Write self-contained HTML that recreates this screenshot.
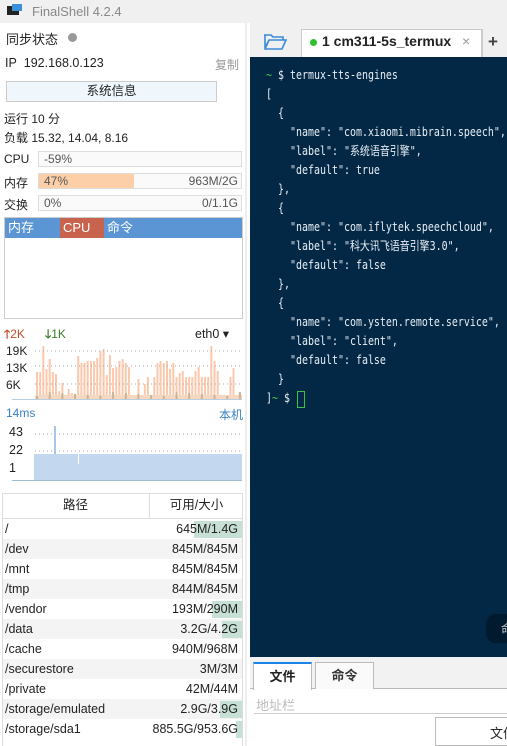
<!DOCTYPE html>
<html><head><meta charset="utf-8"><style>
*{margin:0;padding:0;box-sizing:border-box}
body{width:507px;height:746px;overflow:hidden;background:#fff;font-family:"Liberation Sans","Noto Sans CJK SC",sans-serif;font-size:12px;color:#222;position:relative}
.a{position:absolute}
.term{font-family:"DejaVu Sans Mono","Noto Sans CJK SC",monospace;font-size:12px;color:#e8eef4;white-space:pre;line-height:19px;transform:scaleX(0.83);transform-origin:0 0}
.bar{position:absolute;left:38px;width:204px;height:16px;border:1px solid #ddd;background:#fafafa;font-size:12px;color:#555;line-height:14px}
.rows div{height:20px;line-height:20px;font-size:12.5px;position:relative;padding-left:2px}
.rows div:nth-child(even){background:#f4f4f4}
.rows span{position:absolute;right:4px;top:0}
.rows i{position:absolute;right:0;top:2px;height:17px;background:#c7e0d6}
</style></head><body>
<div class="a" style="left:0;top:0;width:507px;height:23px;background:#f0f0f0"></div>
<svg class="a" style="left:7px;top:4px" width="16" height="14"><rect x="0" y="2" width="12" height="9" fill="#222"/><rect x="5" y="0" width="10" height="7" fill="#3b8fd8"/></svg>
<div class="a" style="left:32px;top:4px;color:#888;font-size:13px">FinalShell 4.2.4</div>
<div class="a" style="left:6px;top:29px;font-size:13px">同步状态</div>
<div class="a" style="left:68px;top:33px;width:9px;height:9px;border-radius:50%;background:#999"></div>
<div class="a" style="left:5px;top:56px;font-size:12.5px">IP&nbsp; 192.168.0.123</div>
<div class="a" style="left:215px;top:56px;color:#999">复制</div>
<div class="a" style="left:6px;top:81px;width:211px;height:21px;border:1px solid #ccc;background:#eff7fd;text-align:center;line-height:19px;font-size:12.5px">系统信息</div>
<div class="a" style="left:4px;top:110px">运行 10 分</div>
<div class="a" style="left:4px;top:129px">负载 15.32, 14.04, 8.16</div>
<div class="a" style="left:4px;top:152px">CPU</div>
<div class="bar" style="top:151px"><span style="margin-left:5px">-59%</span></div>
<div class="a" style="left:4px;top:174px">内存</div>
<div class="bar" style="top:173px"><div style="position:absolute;left:0;top:0;width:95px;height:14px;background:#fccfa8"></div><span style="position:absolute;left:5px">47%</span><span style="position:absolute;right:3px">963M/2G</span></div>
<div class="a" style="left:4px;top:196px">交换</div>
<div class="bar" style="top:195px"><span style="position:absolute;left:5px">0%</span><span style="position:absolute;right:3px">0/1.1G</span></div>
<div class="a" style="left:4px;top:217px;width:239px;height:102px;border:1px solid #ccc"></div>
<div class="a" style="left:5px;top:218px;width:237px;height:20px;background:#5b95d3;color:#fff;font-size:13px;line-height:20px"><span style="padding-left:3px">内存</span><span style="position:absolute;left:55px;width:44px;height:20px;background:#c8644e;padding-left:3px">CPU</span><span style="position:absolute;left:102px">命令</span></div>
<div class="a" style="left:4px;top:325px;color:#c0502a;font-size:12px"><b>🡑</b>2K</div>
<div class="a" style="left:45px;top:325px;color:#3a7a28;font-size:12px"><b>🡓</b>1K</div>
<div class="a" style="left:195px;top:326px;font-size:12.5px">eth0 ▾</div>
<svg class="a" style="left:0;top:340px" width="245" height="142" id="ch"></svg>
<div class="a" style="left:6px;top:343px;font-size:12px;line-height:17px">19K<br>13K<br>6K</div>
<div class="a" style="left:6px;top:406px;color:#3a7fc4;font-size:12px">14ms</div>
<div class="a" style="left:219px;top:406px;color:#3a7fc4;font-size:12px">本机</div>
<div class="a" style="left:9px;top:423px;font-size:12.5px;line-height:18px">43<br>22<br>1</div>
<div class="a" style="left:2px;top:493px;width:241px;height:253px;border:1px solid #ddd;border-bottom:none"></div>
<div class="a" style="left:2px;top:493px;width:241px;height:26px;border-bottom:1px solid #ddd;font-size:12.5px;line-height:25px"><span style="position:absolute;left:0;width:148px;text-align:center;border-right:1px solid #ddd;height:25px">路径</span><span style="position:absolute;left:148px;width:93px;text-align:center">可用/大小</span></div>
<div class="a rows" style="left:3px;top:519px;width:239px">
<div>/<i style="width:48px"></i><span>645M/1.4G</span></div>
<div>/dev<span>845M/845M</span></div>
<div>/mnt<span>845M/845M</span></div>
<div>/tmp<span>844M/845M</span></div>
<div>/vendor<i style="width:30px"></i><span>193M/290M</span></div>
<div>/data<i style="width:20px"></i><span>3.2G/4.2G</span></div>
<div>/cache<span>940M/968M</span></div>
<div>/securestore<span>3M/3M</span></div>
<div>/private<span>42M/44M</span></div>
<div>/storage/emulated<i style="width:22px"></i><span>2.9G/3.9G</span></div>
<div>/storage/sda1<i style="width:6px"></i><span>885.5G/953.6G</span></div>
</div>
<div class="a" style="left:245px;top:520px;color:#aaa;font-size:8px;line-height:5px">·<br>·<br>·</div>
<div class="a" style="left:245px;top:23px;width:2px;height:723px;background:#eee"></div>
<div class="a" style="left:250px;top:23px;width:257px;height:34px;background:#f0f0f0"></div>
<svg class="a" style="left:263px;top:32px" width="24" height="18"><path d="M1 3h7l2 2h10v3H6L2 16V3z M6 8h17l-4 9H2z" fill="none" stroke="#3a8ad8" stroke-width="1.6"/></svg>
<div class="a" style="left:301px;top:29px;width:181px;height:28px;background:#fff;border:1px solid #ccc;border-bottom:none"></div>
<div class="a" style="left:310px;top:39px;width:7px;height:7px;border-radius:50%;background:#2ec12e"></div>
<div class="a" style="left:322px;top:33px;font-size:14px;font-weight:bold;color:#222">1 cm311-5s_termux</div>
<div class="a" style="left:462px;top:33px;font-size:14px;color:#999">×</div>
<div class="a" style="left:482px;top:29px;width:25px;height:28px;border-left:1px solid #ccc;font-size:17px;font-weight:bold;color:#444;padding-left:5px;line-height:26px">+</div>
<div class="a" style="left:250px;top:57px;width:257px;height:600px;background:#022846"></div>
<div class="a term" style="left:266px;top:66px"><span style="color:#49c44a">~</span> $ termux-tts-engines
[
  {
    "name": "com.xiaomi.mibrain.speech",
    "label": "系统语音引擎",
    "default": true
  },
  {
    "name": "com.iflytek.speechcloud",
    "label": "科大讯飞语音引擎3.0",
    "default": false
  },
  {
    "name": "com.ysten.remote.service",
    "label": "client",
    "default": false
  }
]<span style="color:#49c44a">~</span> $ </div>
<div class="a" style="left:297px;top:391px;width:8px;height:17px;border:1px solid #2fc44a"></div>
<div class="a" style="left:486px;top:614px;width:30px;height:29px;border-radius:10px;background:#011a2e;color:#ccc;padding:6px 0 0 15px;white-space:nowrap;overflow:hidden">命</div>
<div class="a" style="left:250px;top:657px;width:257px;height:89px;background:#fff"></div>
<div class="a" style="left:250px;top:657px;width:257px;height:32px;background:#f2f2f2;border-bottom:1px solid #bbb"></div>
<div class="a" style="left:253px;top:662px;width:59px;height:28px;background:#fff;border-top:2px solid #1d84e8;border-left:1px solid #bbb;border-right:1px solid #bbb;text-align:center;line-height:25px;font-weight:bold;font-size:13px">文件</div>
<div class="a" style="left:315px;top:662px;width:59px;height:27px;background:#fafafa;border:1px solid #bbb;border-bottom:none;text-align:center;line-height:25px;font-weight:bold;font-size:13px;color:#333">命令</div>
<div class="a" style="left:256px;top:695px;color:#bbb;font-size:13px">地址栏</div>
<div class="a" style="left:254px;top:713px;width:253px;height:1px;background:#ccc"></div>
<div class="a" style="left:435px;top:717px;width:80px;height:29px;border:1px solid #bbb;padding:5px 0 0 54px;font-size:13px;white-space:nowrap;overflow:hidden">文件</div>
<script>
var s=document.getElementById('ch'),h='';
function R(x,y,w,hh,c){h+='<rect x="'+x+'" y="'+y+'" width="'+w+'" height="'+hh+'" fill="'+c+'"/>';}
function L(y){h+='<line x1="35" x2="242" y1="'+y+'" y2="'+y+'" stroke="#aaa" stroke-dasharray="1,3"/>';}
var v=[27,27,53,30,40,27,25,8,16,3,10,6,3,43,36,36,38,38,38,41,48,50,24,44,31,32,38,40,36,32,2,2,20,2,15,22,1,22,36,38,36,38,30,36,22,26,28,22,22,22,28,32,22,22,22,53,38,28,2,2,2,22,31,2,6];
for(var i=0;i<v.length;i++){var x=36+i*3.17;R(x.toFixed(1),59-v[i],2,v[i],'#fbc8ac');}
R(35,55,207,4,'#f6d7c2');
for(var i=0;i<v.length;i+=4){R((36+i*3.17).toFixed(1),56-(i%5),2,3+(i%5),'#c9b494');}
L(11);L(26);L(44);
R(12,59,230,1,'#b7cfe0');
L(94);L(111);L(128);
R(34,114,208,26,'#c3d8ef');R(54,86,2,28,'#a9c5e8');R(78,114,1,10,'#fff');
R(12,140,230,1,'#9dbad6');
s.innerHTML=h;
</script>
</body></html>
